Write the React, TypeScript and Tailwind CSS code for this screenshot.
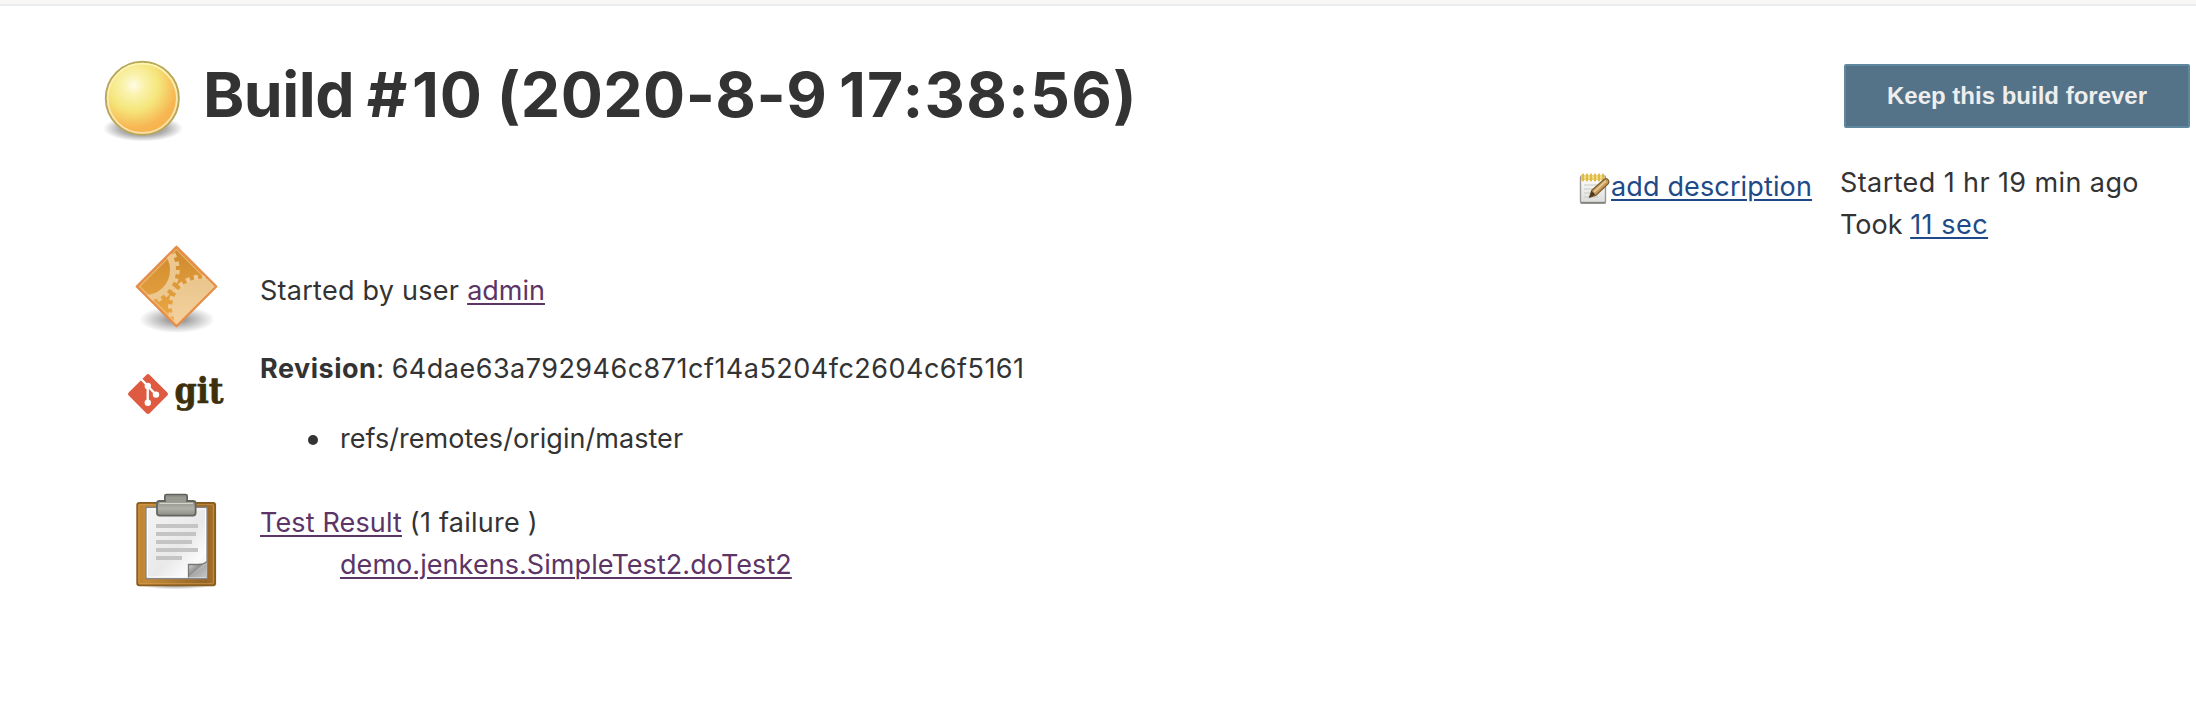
import type { ReactNode } from "react";

function Link({ visited, className = "", children }: { visited?: boolean; className?: string; children: ReactNode }) {
  return (
    <a
      href="#"
      className={`underline decoration-2 underline-offset-[3px] ${visited ? "text-[#5c3566]" : "text-[#204a87]"} ${className}`}
    >
      {children}
    </a>
  );
}

function BallIcon() {
  return (
    <svg className="h-[92px] w-[84px] shrink-0" viewBox="0 0 84 92">
      <defs>
        <radialGradient id="ball" cx="0.38" cy="0.32" r="0.66">
          <stop offset="0" stopColor="#fffbe6" />
          <stop offset="0.2" stopColor="#faf3b0" />
          <stop offset="0.52" stopColor="#f5e67c" />
          <stop offset="0.88" stopColor="#f7b753" />
          <stop offset="1" stopColor="#f6b34e" />
        </radialGradient>
        <radialGradient id="ballShade">
          <stop offset="0" stopColor="#000" stopOpacity="0.6" />
          <stop offset="0.6" stopColor="#000" stopOpacity="0.3" />
          <stop offset="1" stopColor="#000" stopOpacity="0" />
        </radialGradient>
        <linearGradient id="ballRim" x1="0" y1="0" x2="0" y2="1">
          <stop offset="0" stopColor="#fbf6b5" />
          <stop offset="1" stopColor="#fde0a8" />
        </linearGradient>
      </defs>
      <ellipse cx="41" cy="74.5" rx="40" ry="13" fill="url(#ballShade)" />
      <circle cx="40.3" cy="44.3" r="36.5" fill="url(#ball)" stroke="#b9a85c" strokeWidth="2" />
      <circle cx="40.3" cy="44.3" r="34.6" fill="none" stroke="url(#ballRim)" strokeWidth="1.8" />
    </svg>
  );
}

function NoteIcon() {
  return (
    <svg className="h-8 w-8 shrink-0" viewBox="0 0 32 32">
      <defs>
        <linearGradient id="note" x1="0" y1="0" x2="0" y2="1">
          <stop offset="0" stopColor="#fff" />
          <stop offset="1" stopColor="#dcdcda" />
        </linearGradient>
      </defs>
      <rect x="2.5" y="4" width="25" height="27.2" rx="1.5" fill="url(#note)" stroke="#9a9b96" strokeWidth="1.4" />
      <path d="M3 30.6h24.5" stroke="#85867f" strokeWidth="1.6" />
      <path d="M6 13h18M6 17h17M6 21h15M6 25h14" stroke="#c9cac6" strokeWidth="1.2" />
      <path d="M3 3.5h23.5v4.5H3z" fill="#ecd06b" />
      <path d="M5 2.5v6M9 2.5v6M13 2.5v6M17 2.5v6M21 2.5v6M25 2.5v6" stroke="#dfbb48" strokeWidth="2.2" strokeLinecap="round" />
      <path d="M7 3v4M11 3v4M15 3v4M19 3v4M23 3v4" stroke="#f9e9a4" strokeWidth="1" />
      <path d="M11.6 25.3l2.2-7L26.2 7.2q2.6-1.4 4.3 1.2 1 2-.6 3.6L18 23.2z" fill="#c59a5c" stroke="#7c5a2c" strokeWidth="1.2" />
      <path d="M16 20L28 8.8" stroke="#e8c892" strokeWidth="1.8" />
      <path d="M11.3 25.6l2.3-6.8 3.8 3.9z" fill="#4b3a24" />
    </svg>
  );
}

function GearsIcon() {
  return (
    <svg className="h-24 w-24" viewBox="0 0 96 96">
      <defs>
        <linearGradient id="diamond" x1="0" y1="0" x2="0" y2="1">
          <stop offset="0" stopColor="#cd882c" />
          <stop offset="1" stopColor="#efab48" />
        </linearGradient>
        <linearGradient id="gear" x1="0" y1="0" x2="0" y2="1">
          <stop offset="0" stopColor="#e9c58c" />
          <stop offset="1" stopColor="#f8d6a4" />
        </linearGradient>
        <radialGradient id="diamondShade">
          <stop offset="0" stopColor="#000" stopOpacity="0.5" />
          <stop offset="0.5" stopColor="#000" stopOpacity="0.24" />
          <stop offset="1" stopColor="#000" stopOpacity="0" />
        </radialGradient>
        <clipPath id="diamondClip">
          <path d="M48.5 6.5l40 40-40 40-40-40z" />
        </clipPath>
      </defs>
      <ellipse cx="49" cy="79.5" rx="38" ry="13.5" fill="url(#diamondShade)" />
      <path d="M48.5 6.5l40 40-40 40-40-40z" fill="url(#diamond)" />
      <g clipPath="url(#diamondClip)" fill="none">
        <circle cx="17" cy="30" r="28" stroke="#ecc88f" strokeWidth="6" />
        <circle cx="17" cy="30" r="32.5" stroke="#ecc88f" strokeWidth="4.5" strokeDasharray="4.25 4.25" />
        <circle cx="74" cy="68.5" r="30" fill="url(#gear)" />
        <circle cx="74" cy="68.5" r="31.5" stroke="#efcc97" strokeWidth="5" strokeDasharray="4.12 4.12" />
      </g>
      <path d="M48.5 9.5l37 37-37 37-37-37z" fill="none" stroke="#f6c98c" strokeOpacity="0.6" strokeWidth="1.4" />
      <path d="M48.5 6.7l39.8 39.8-39.8 39.8L8.7 46.5z" fill="none" stroke="#e58d4a" strokeWidth="2.2" strokeLinejoin="round" />
    </svg>
  );
}

function GitIcon() {
  return (
    <svg className="h-12 w-24 overflow-visible" viewBox="0 0 96 48">
      <path d="M18.3 4.9q1.7-1.7 3.4 0L39.3 22.4q1.6 1.6 0 3.2L21.7 43.2q-1.7 1.6-3.4 0L.7 25.6q-1.6-1.6 0-3.2z" fill="#de5b41" />
      <path d="M13.5 9.5l6.2 6.3v17M20 16.5l8 8" fill="none" stroke="#fff" strokeWidth="2.3" />
      <circle cx="19.8" cy="16" r="3.2" fill="#fff" />
      <circle cx="28" cy="24.6" r="3.2" fill="#fff" />
      <circle cx="19.8" cy="32.8" r="3.2" fill="#fff" />
      <text
        x="46.5"
        y="33"
        textLength="49"
        lengthAdjust="spacingAndGlyphs"
        strokeWidth="0.7"
        className="fill-[#3e2f0c] stroke-[#3e2f0c] font-['DejaVu_Serif',serif] text-[35px] font-bold"
      >
        git
      </text>
    </svg>
  );
}

function ClipboardIcon() {
  return (
    <svg className="h-24 w-24" viewBox="0 0 96 96">
      <defs>
        <linearGradient id="board" x1="0" y1="0" x2="1" y2="0">
          <stop offset="0" stopColor="#bd8231" />
          <stop offset="0.1" stopColor="#c58a38" />
          <stop offset="0.88" stopColor="#946425" />
          <stop offset="1" stopColor="#a8732b" />
        </linearGradient>
        <linearGradient id="paper" x1="0" y1="0" x2="1" y2="1">
          <stop offset="0" stopColor="#f4f4f4" />
          <stop offset="0.55" stopColor="#e9e9e9" />
          <stop offset="0.8" stopColor="#fbfbfb" />
          <stop offset="1" stopColor="#e0e0e0" />
        </linearGradient>
        <linearGradient id="metal" x1="0" y1="0" x2="0" y2="1">
          <stop offset="0" stopColor="#8d8f87" />
          <stop offset="0.5" stopColor="#b0b1a8" />
          <stop offset="1" stopColor="#8c8d84" />
        </linearGradient>
        <linearGradient id="fold" x1="0" y1="0" x2="1" y2="1">
          <stop offset="0" stopColor="#e4e4e4" />
          <stop offset="0.45" stopColor="#8f8f8f" />
          <stop offset="0.55" stopColor="#c4c4c4" />
          <stop offset="1" stopColor="#eee" />
        </linearGradient>
        <radialGradient id="boardShade">
          <stop offset="0" stopColor="#000" stopOpacity="0.5" />
          <stop offset="1" stopColor="#000" stopOpacity="0" />
        </radialGradient>
      </defs>
      <ellipse cx="48" cy="91.5" rx="38" ry="5" fill="url(#boardShade)" />
      <rect x="9.2" y="9.8" width="78" height="82.5" rx="2" fill="url(#board)" stroke="#8a5c1d" strokeWidth="1.8" />
      <rect x="11" y="11.7" width="74.4" height="79" rx="1" fill="none" stroke="#d9a55a" strokeOpacity="0.6" />
      <rect x="18" y="14.5" width="61" height="71" fill="url(#paper)" stroke="#85868a" strokeWidth="1.6" />
      <rect x="19.4" y="15.9" width="58.2" height="68.2" fill="none" stroke="#fff" strokeWidth="1.2" />
      <g fill="#c4c4c4">
        <rect x="28" y="31" width="42" height="4" />
        <rect x="28" y="39" width="40" height="4" />
        <rect x="28" y="47" width="36" height="4" />
        <rect x="28" y="55" width="42" height="4" />
        <rect x="28" y="63" width="26" height="4" />
      </g>
      <path d="M60.5 84.5V71.5h9.5q7 0 8.6-2.8V84.5z" fill="url(#fold)" />
      <path d="M60.5 84.5V71.5h10q6 0 8-2.8" fill="none" stroke="#777973" strokeWidth="1.3" />
      <path d="M61 84.5L78.5 71v13.5z" fill="#777" fillOpacity="0.35" />
      <path d="M36.8 9V3q0-1.5 1.5-1.5h19.4q1.5 0 1.5 1.5V9z" fill="#8f9189" stroke="#5f615b" strokeWidth="1.6" />
      <rect x="29" y="8" width="38.6" height="14.6" rx="2.5" fill="url(#metal)" stroke="#63655f" strokeWidth="1.8" />
      <path d="M31.5 10.3h33.5" stroke="#d3d4cc" strokeWidth="1.3" />
      <rect x="38" y="4" width="20" height="5.5" fill="#999b92" />
    </svg>
  );
}

export default function App() {
  return (
    <div className="h-[702px] w-full overflow-hidden bg-white font-['Inter',sans-serif] text-[27px] leading-[42px] whitespace-nowrap text-[#333]">
      <div className="h-1.5 border-b-2 border-[#ebedef] bg-[#f8f7f6]" />

      <header className="flex h-[142px] items-start justify-between pt-12 pr-1.5 pl-[102px]">
        <div className="flex items-start gap-[17px]">
          <BallIcon />
          <h1 className="pt-1 text-[62.5px] leading-[72px] font-bold tracking-[1px]">
            <span className="tracking-[-0.5px] [word-spacing:-1.5px]">Build </span>
            <span className="tracking-[4.5px]">#</span>
            <span className="[word-spacing:-2px]">10 </span>
            <span className="tracking-[0.45px] [word-spacing:-3.5px]">(2020-8-9 </span>
            <span className="tracking-[1.2px]">17:38:56)</span>
          </h1>
        </div>
        <button className="mt-2.5 h-16 w-[346px] rounded-xs border-2 border-[#5f88a0] bg-[#547388] font-['Liberation_Sans',sans-serif] text-2xl font-bold text-[#eee]">
          Keep this build forever
        </button>
      </header>

      <main className="flex items-start justify-between pl-32">
        <section className="pt-[92px]">
          <div className="flex h-24 items-start gap-9">
            <GearsIcon />
            <p className="pt-[30px]">
              <span className="tracking-[0.26px]">Started by user </span>
              <Link visited>admin</Link>
            </p>
          </div>
          <div className="mt-3 flex items-start gap-9">
            <div className="pt-[22px]">
              <GitIcon />
            </div>
            <div>
              <p>
                <b className="tracking-[0.5px]">Revision</b>
                <span className="tracking-[0.48px] [word-spacing:-1px]">: 64dae63a792946c871cf14a5204fc2604c6f5161</span>
              </p>
              <ul className="mt-7 flex flex-col">
                <li className="flex items-center gap-[22px] pl-12 tracking-[0.04px]">
                  <span className="mt-px size-2.5 rounded-full bg-[#333]" />
                  refs/remotes/origin/master
                </li>
              </ul>
            </div>
          </div>
          <div className="mt-[33px] flex items-start gap-9">
            <ClipboardIcon />
            <div className="pt-[9px]">
              <p>
                <Link visited className="tracking-[0.14px]">Test Result</Link>
                <span className="tracking-[0.25px]"> (1 failure )</span>
              </p>
              <p className="pl-20">
                <Link visited className="tracking-[0.06px]">demo.jenkens.SimpleTest2.doTest2</Link>
              </p>
            </div>
          </div>
        </section>

        <aside className="flex w-[618px] items-start gap-7 pt-3.5">
          <div className="flex w-[234px] items-start gap-px pt-1">
            <span className="flex pt-1.5">
              <NoteIcon />
            </span>
            <Link className="tracking-[0.14px]">add description</Link>
          </div>
          <div>
            <p className="tracking-[0.4px]">Started 1 hr 19 min ago</p>
            <p>
              Took <Link className="tracking-[0.5px]">11 sec</Link>
            </p>
          </div>
        </aside>
      </main>
    </div>
  );
}
